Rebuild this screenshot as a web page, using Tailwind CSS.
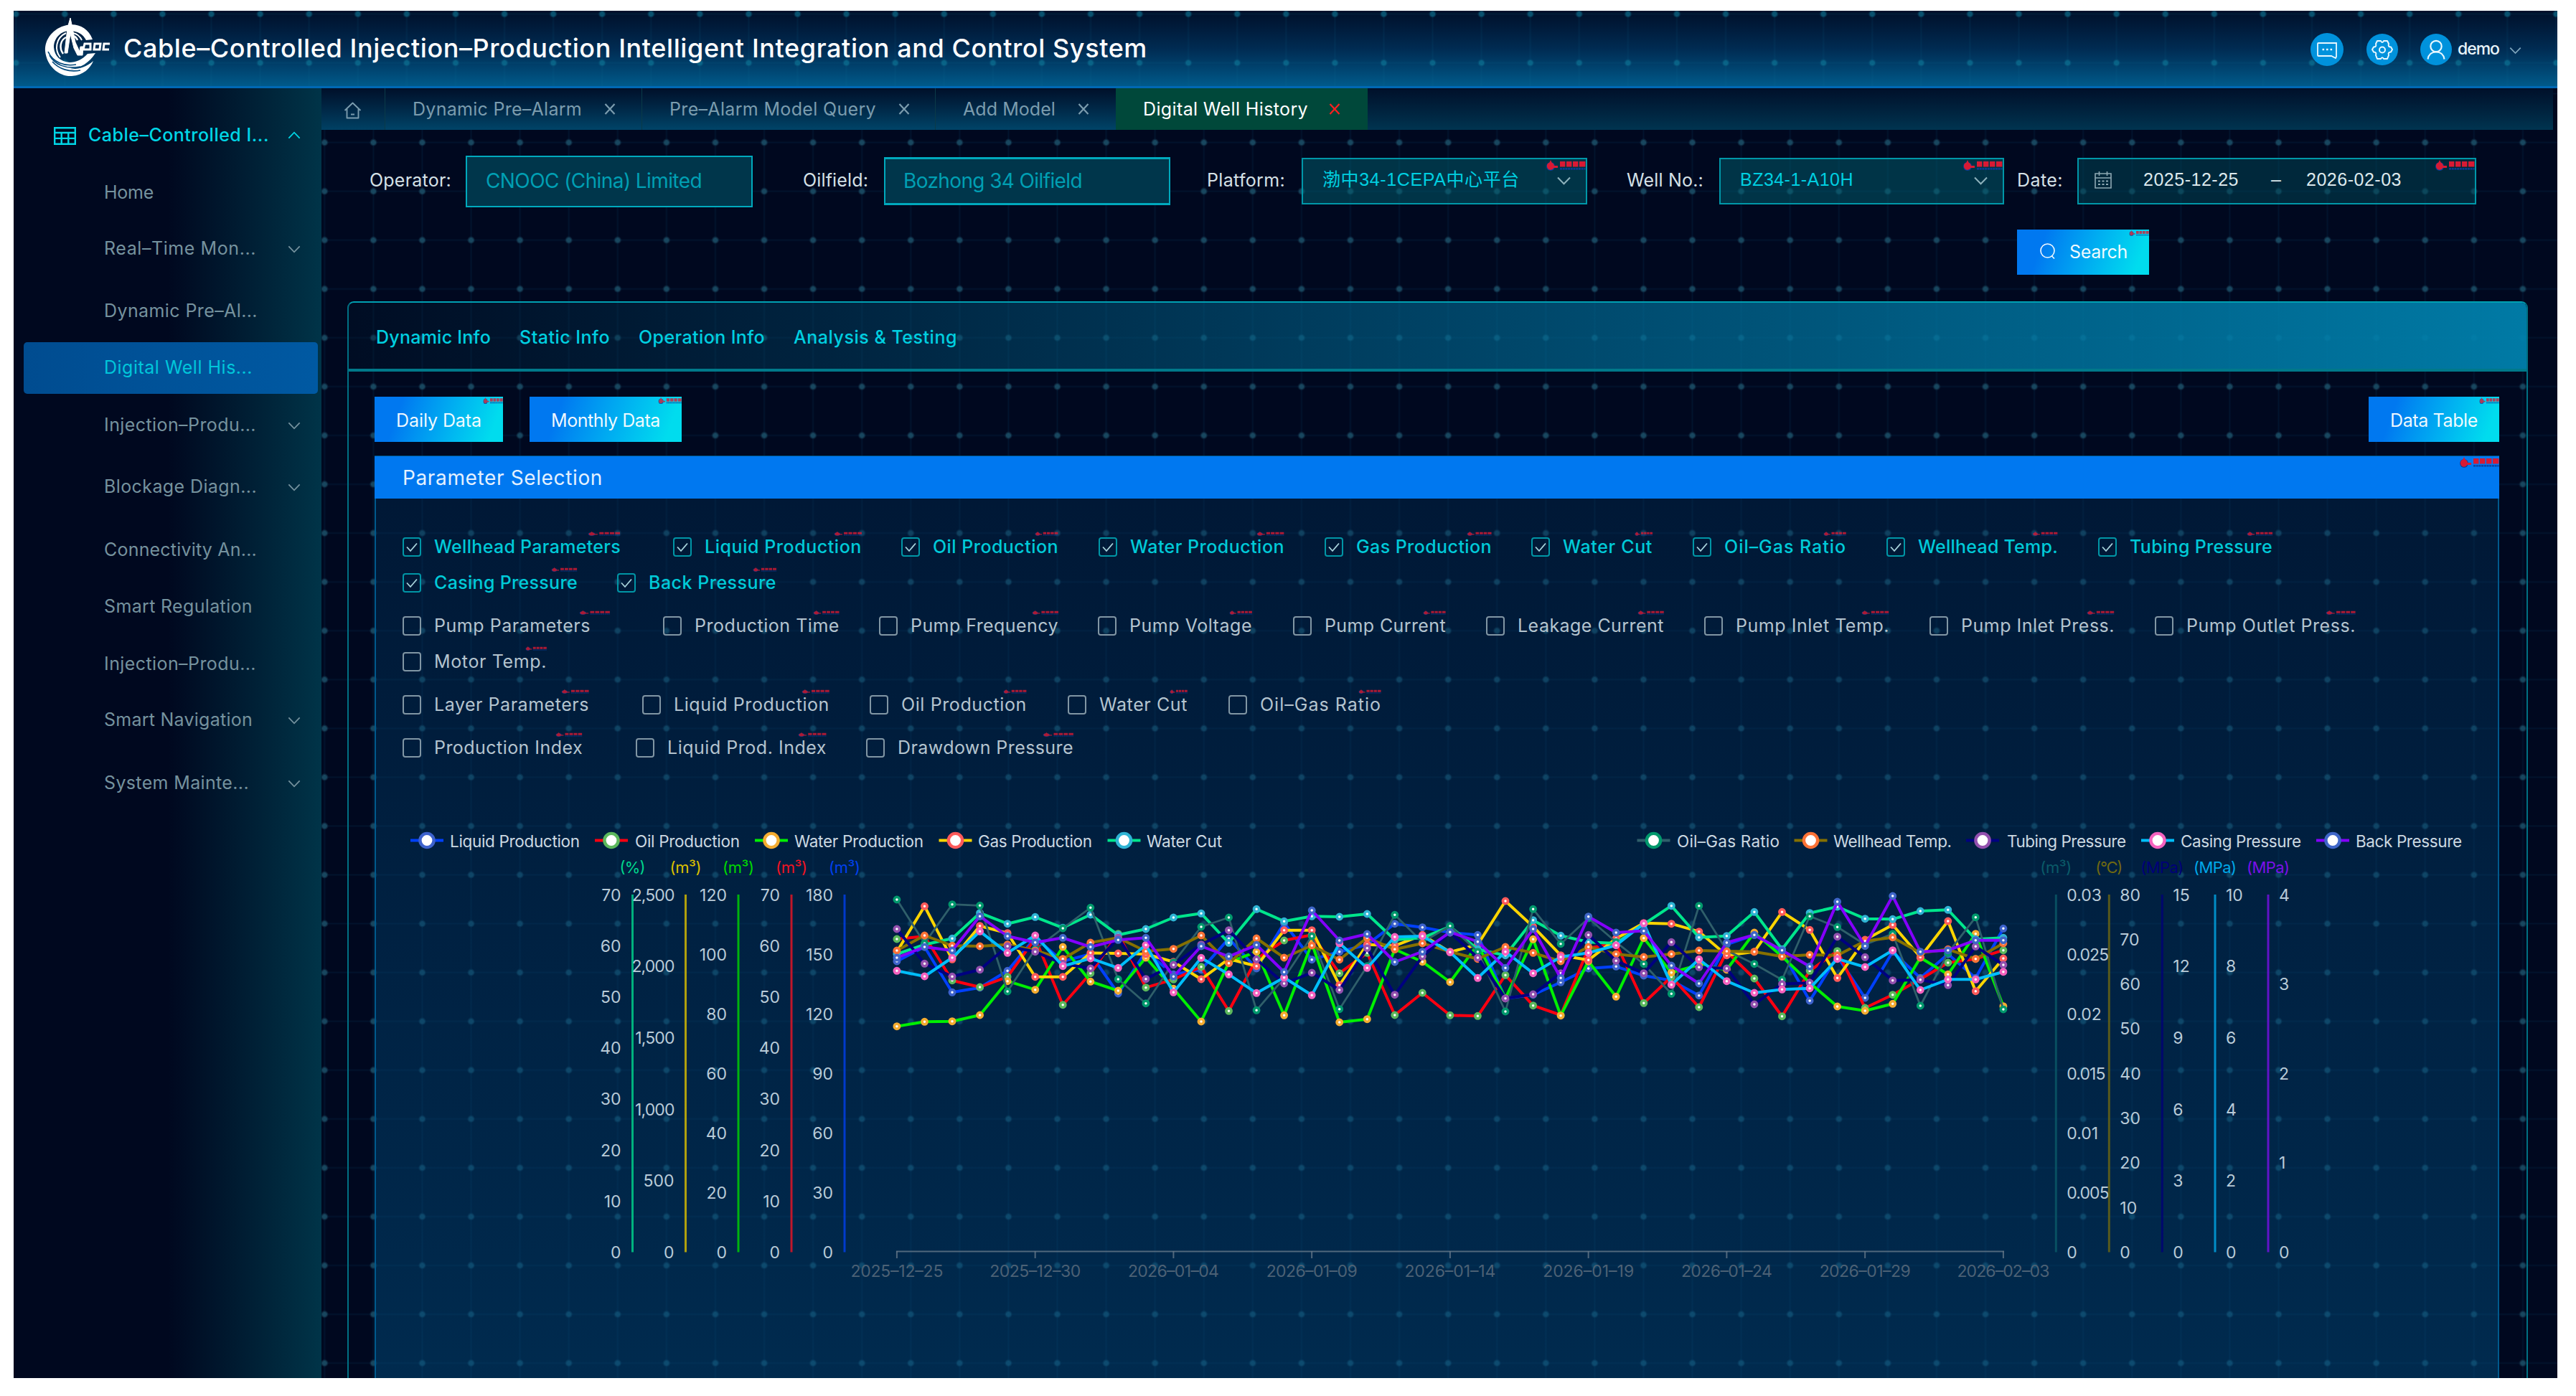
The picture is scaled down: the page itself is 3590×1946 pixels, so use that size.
<!DOCTYPE html>
<html lang="en">
<head>
<meta charset="utf-8">
<title>Cable-Controlled Injection-Production System</title>
<script src="https://cdn.jsdelivr.net/npm/@tailwindcss/browser@4"></script>
</head>
<body class="bg-white w-[3590px] h-[1946px] overflow-hidden font-['Inter','Noto_Sans_CJK_SC',sans-serif] text-[25px] leading-none">
<svg class="hidden">
  <defs>
    <symbol id="wm" viewBox="0 0 56 15" preserveAspectRatio="none">
      <circle cx="7" cy="9" r="6" fill="#0b3f9c"/>
      <path d="M7 0L8.6 3.4A5.6 5.6 0 0 1 12 8H17V11H11.4A5 5 0 0 1 2 9.5 5.6 5.6 0 0 1 5.4 3.4Z" fill="#d81a34"/>
      <path d="M20 2h7.400v7.500H20zM29 2h7.400v7.500H29zM38 2h7.400v7.500H38zM47 2h8.400v7.500H47z" fill="#d81a34"/>
      <path d="M20 12.400H55.500" stroke="#0b3f9c" stroke-width="2.400" stroke-dasharray="3 .7"/>
    </symbol>
    <symbol id="down" viewBox="0 0 20 12"><path d="M1.500 1.500L10 10.200 18.500 1.500" fill="none" stroke="currentColor" stroke-width="2"/></symbol>
    <symbol id="cross" viewBox="0 0 16 16"><path d="M1.500 1L14.500 15M14.500 1L1.500 15" fill="none" stroke="currentColor" stroke-width="2.200"/></symbol>
  </defs>
</svg>
<div class="ml-[19px] mt-[15px] w-[3545px] h-[1906px] overflow-hidden bg-[#00081f] flex flex-col">

  <header class="relative h-[108px] shrink-0 border-b-3 border-[#0068b4] bg-linear-to-b from-[#00102a] via-[#002b52] to-[#005a8a] flex items-center">
    <svg class="absolute inset-0 w-full h-[105px]">
      <defs><pattern id="g1" x="37.300" y="-29.500" width="68.080" height="68.080" patternUnits="userSpaceOnUse"><path d="M34 0V68.100M0 34H68.100" stroke="#0a6a94" stroke-opacity=".1" stroke-width="2"/><circle cx="34" cy="34" r="5" fill="#0a7090" fill-opacity=".28"/><circle cx="34" cy="34" r="3.500" fill="#1287a3" fill-opacity=".38"/></pattern></defs>
      <rect width="3545" height="105" fill="url(#g1)"/>
    </svg>
    <svg class="relative ml-[43px] w-[91px] h-[82px] mt-[-4px] shrink-0" viewBox="0 0 91 82" fill="none" stroke="#fff">
      <path d="M67 30C61 13 45 7 31 10C12 14 0 30 1 46C3 68 21 82 38 81C54 80 64 70 68 60C58 69 46 72 36 71C50 70 62 63 71 49L60 50C53 58 44 62 35 62C22 61 14 53 13 41C13 28 23 18 35 18C46 18 54 23 58 31Z" fill="#fff" stroke="none"/>
      <path d="M7 52C14 65 30 72 50 68M11 61C20 71 34 76 50 73M5 47C12 62 28 68 44 65" stroke="#00477a" stroke-width="1.600"/>
      <path d="M22 55C14 45 15 28 30 21M52 31C49 25 45 22 40 21" stroke-width="2"/>
      <path d="M26 50C20 42 22 31 30 27M46 31C45 28 43 26 40 25" stroke-width="2.500"/>
      <path d="M36 0L32 14 28 49 32 49 36 22 41 42 46 52 53 52 54 40 50 40 49 47 43 34 39 14Z" fill="#fff" stroke="#fff"/>
      <path d="M56 36H64V44H54ZM70 36H78L77 44H69ZM91 36H83L82 44H90" stroke-width="3"/>
    </svg>
    <h1 class="relative ml-[19px] w-[1427px] shrink-0 whitespace-nowrap text-[36px] font-medium text-white mt-[-1px]" data-fit>Cable–Controlled Injection–Production Intelligent Integration and Control System</h1>
    <div class="relative ml-[1621px] mt-[2px] shrink-0 flex items-center">
      <svg class="w-[46px] h-[46px]" viewBox="0 0 46 46" fill="none" stroke="#e8f8ff" stroke-width="1.800"><circle cx="23" cy="23" r="23" fill="#0092dc" stroke="none"/><path d="M11 14H36V33L35 35 29 32H11a1 1 0 0 1-1-1V15a1 1 0 0 1 1-1Z"/><path d="M16.500 23h2.600M22 23h2.600M27.500 23h2.600" stroke-width="2.600"/></svg>
      <svg class="ml-[32px] w-[44px] h-[44px]" viewBox="0 0 44 44" fill="none" stroke="#e8f8ff" stroke-width="2" stroke-linejoin="round"><circle cx="22" cy="22" r="22" fill="#0092dc" stroke="none"/><path d="M15 10L20 10C21 12.500 23 12.500 24 10L29 10 31 14C30 17 31 18.500 34 18.500L36 22 34 25.500C31 25.500 30 27 31 30L29 35 24 35C23 32.500 21 32.500 20 35L15 35 13 30C14 27 13 25.500 10 25.500L8 22 10 18.500C13 18.500 14 17 13 14Z"/><circle cx="22" cy="22.500" r="4"/></svg>
      <svg class="ml-[31px] w-[44px] h-[44px]" viewBox="0 0 44 44" fill="none" stroke="#e8f8ff" stroke-width="2.200"><circle cx="22" cy="22" r="22" fill="#0092dc" stroke="none"/><circle cx="22" cy="17.500" r="7.700"/><path d="M10.500 35.500C11.500 29 16 25.500 22 25.500S32.500 29 33.500 35.500"/></svg>
      <span class="ml-[8px] w-[58px] text-[23px] font-medium text-[#e8f4fa]" data-fit>demo</span>
      <svg class="ml-[14px] mt-[3px] w-[17px] h-[11px] text-[#7fa6bd]"><use href="#down"/></svg>
    </div>
  </header>

  <div class="flex flex-1 min-h-0">
    <aside class="w-[429px] shrink-0 bg-linear-to-r from-[#00081f] from-50% to-[#003448]">
      <div class="mt-[29px] h-[72px] flex items-center text-[#00d6e6]">
        <svg class="ml-[56px] w-[31px] h-[25px] mt-[2px]" viewBox="0 0 31 25" fill="none" stroke="currentColor" stroke-width="2.400"><path d="M1.200 1.200H29.800V23.800H1.200ZM1.200 8H29.800M1.200 15.900H29.800M10.700 8V24M20.300 8V24"/></svg>
        <span class="ml-[17px] w-[252px] whitespace-nowrap font-medium" data-fit>Cable–Controlled I...</span>
        <svg class="ml-[26px] w-[18px] h-[11px] rotate-180"><use href="#down"/></svg>
      </div>
      <nav id="menu" class="text-[#75929e]"></nav>
    </aside>

    <main class="relative flex-1 min-w-0">
      <svg class="absolute inset-0 w-full h-full">
        <defs><pattern id="g2" x="-29.700" y="41.600" width="68.080" height="68.060" patternUnits="userSpaceOnUse"><path d="M34 0V68.100M0 34H68.100" stroke="#0b5f88" stroke-opacity=".13" stroke-width="2"/><circle cx="34" cy="34" r="5" fill="#2a7088" fill-opacity=".26"/><circle cx="34" cy="34" r="3.500" fill="#2f7f95" fill-opacity=".34"/></pattern></defs>
        <rect width="3116" height="1798" fill="url(#g2)"/>
      </svg>
      <div class="relative flex flex-col h-full">
        <div class="h-[58px] w-[3110px] shrink-0 flex bg-linear-to-b from-[#00102a] to-[#003450] text-[#7b9cae]">
          <div class="w-[89px] border-r border-[#0a3a48] bg-linear-to-b from-[#00102a] to-[#004164] flex items-center">
            <svg class="ml-[31px] mt-1 w-[25px] h-[24px]" viewBox="0 0 25 24" fill="none" stroke="currentColor" stroke-width="1.900" stroke-linejoin="round"><path d="M1.500 12L12.500 1.500 23.500 12M4.500 10V22.500H20.500V10M10 17.500H15"/></svg>
          </div>
          <div class="w-[358px] border-r border-[#0a3a48] bg-linear-to-b from-[#00102a] to-[#004468] flex items-center pl-[38px]"><span class="w-[236px] whitespace-nowrap" data-fit>Dynamic Pre–Alarm</span><svg class="ml-[31px] w-[16px] h-[16px]"><use href="#cross"/></svg></div>
          <div class="w-[409px] border-r border-[#0a3a48] bg-linear-to-b from-[#00102a] to-[#004468] flex items-center pl-[38px]"><span class="w-[288px] whitespace-nowrap" data-fit>Pre–Alarm Model Query</span><svg class="ml-[31px] w-[16px] h-[16px]"><use href="#cross"/></svg></div>
          <div class="w-[251px] bg-linear-to-b from-[#00102a] to-[#004468] flex items-center pl-[38px]"><span class="w-[129px] whitespace-nowrap" data-fit>Add Model</span><svg class="ml-[31px] w-[16px] h-[16px]"><use href="#cross"/></svg></div>
          <div class="w-[351px] bg-[#00483a] flex items-center pl-[38px] text-white"><span class="w-[230px] whitespace-nowrap" data-fit>Digital Well History</span><svg class="ml-[29px] w-[16px] h-[16px] text-[#ff2020]"><use href="#cross"/></svg></div>
        </div>

        <div class="mt-[3px] h-[136px] shrink-0 flex items-center text-[#d5e0e6]">
          <span class="ml-[67px] mt-[-2px] w-[114px] whitespace-nowrap" data-fit>Operator:</span>
          <div class="ml-[20px] w-[400px] h-[72px] mt-[2px] border-2 border-[#00a9bd] bg-[#00364b] flex items-center pl-[26px] text-[28px] text-[#009fb3]"><span class="w-[301px] mt-[-2px] whitespace-nowrap" data-fit>CNOOC (China) Limited</span></div>
          <span class="ml-[70px] mt-[-2px] w-[91px] whitespace-nowrap" data-fit>Oilfield:</span>
          <div class="ml-[22px] w-[399px] h-[67px] border-x-2 border-y-3 border-[#00a9bd] bg-[#00364b] flex items-center pl-[25px] text-[28px] text-[#009fb3]"><span class="w-[249px] whitespace-nowrap" data-fit>Bozhong 34 Oilfield</span></div>
          <span class="ml-[51px] mt-[-2px] w-[109px] whitespace-nowrap" data-fit>Platform:</span>
          <div class="relative ml-[23px] w-[398px] h-[65px] border-2 border-[#0097a8] bg-[#00606f]/50 flex items-center pl-[27px] text-[#00cfe0] font-['Liberation_Sans','Noto_Sans_CJK_SC',sans-serif]"><span class="w-[275px] mt-[-3px] whitespace-nowrap" data-fit>渤中34-1CEPA中心平台</span><svg class="ml-[51px] w-[21px] h-[12px] text-[#8fb3bd]"><use href="#down"/></svg><svg class="absolute right-0 top-px w-[56px] h-[15px]"><use href="#wm"/></svg></div>
          <span class="ml-[55px] mt-[-2px] w-[107px] whitespace-nowrap" data-fit>Well No.:</span>
          <div class="relative ml-[22px] w-[397px] h-[65px] border-2 border-[#0097a8] bg-[#00606f]/50 flex items-center pl-[27px] text-[#00cfe0] font-['Liberation_Sans',sans-serif]"><span class="w-[158px] mt-[-3px] whitespace-nowrap" data-fit>BZ34-1-A10H</span><svg class="ml-[167px] w-[21px] h-[12px] text-[#8fb3bd]"><use href="#down"/></svg><svg class="absolute right-0 top-px w-[56px] h-[15px]"><use href="#wm"/></svg></div>
          <span class="ml-[18px] mt-[-2px] w-[64px] whitespace-nowrap" data-fit>Date:</span>
          <div class="relative ml-[20px] w-[556px] h-[65px] border-2 border-[#0097a8] bg-[#004858]/50 flex items-center text-[#dce8ec] font-['Liberation_Sans',sans-serif]">
            <svg class="ml-[22px] mt-[-3px] w-[24px] h-[24px]" viewBox="0 0 24 24" fill="none" stroke="#8fa9b4" stroke-width="1.600"><path d="M1 3H23V23H1ZM1 9H23M6.500 0V6M17.500 0V6"/><path d="M5 13.500H19M5 18H19" stroke-width="2.200" stroke-dasharray="3 2.500"/></svg>
            <span class="ml-[44px] mt-[-3px] w-[133px] whitespace-nowrap" data-fit>2025-12-25</span>
            <span class="ml-[45px] mt-[-3px] w-[13px]">–</span>
            <span class="ml-[36px] mt-[-3px] w-[133px] whitespace-nowrap" data-fit>2026-02-03</span>
            <svg class="absolute right-0 top-px w-[56px] h-[15px]"><use href="#wm"/></svg>
          </div>
        </div>

        <div class="relative ml-[2363px] w-[184px] h-[63px] shrink-0 bg-linear-110 from-[#0078f0] from-20% to-[#00dcee] to-90% flex items-center text-white/95">
          <svg class="ml-[32px] mt-[-3px] w-[22px] h-[22px]" viewBox="0 0 22 22" fill="none" stroke="currentColor" stroke-width="1.600"><circle cx="10.500" cy="10.500" r="9.500"/><path d="M16 17.500L20 21.500"/></svg>
          <span class="ml-[19px] w-[81px] whitespace-nowrap" data-fit>Search</span>
          <svg class="absolute right-0 top-px w-[28px] h-[8px] opacity-80"><use href="#wm"/></svg>
        </div>

        <section class="mt-[37px] ml-[36px] w-[3039px] h-[1520px] shrink-0 border-2 border-[#007083] border-t-[#00a0b2] rounded-t-[9px] overflow-hidden">
          <div class="h-[96px] border-b-4 border-[#00798a] bg-linear-to-r from-[#00182e]/30 via-[#006a94]/60 to-[#0080ac]/95 flex items-center pt-[5px] pl-[38px] font-medium text-[#00cfe0]">
            <span class="w-[160px] whitespace-nowrap" data-fit>Dynamic Info</span>
            <span class="ml-[40px] w-[126px] whitespace-nowrap" data-fit>Static Info</span>
            <span class="ml-[40px] w-[176px] whitespace-nowrap" data-fit>Operation Info</span>
            <span class="ml-[40px] w-[228px] whitespace-nowrap" data-fit>Analysis &amp; Testing</span>
          </div>
          <div class="mt-[35px] ml-[36px] w-[2961px] flex text-white/95">
            <div class="relative w-[179px] h-[63px] pt-[3px] bg-linear-110 from-[#0078f0] from-20% to-[#00dcee] to-90% flex items-center pl-[30px]"><span class="w-[119px] whitespace-nowrap" data-fit>Daily Data</span><svg class="absolute right-0 top-px w-[28px] h-[9px] opacity-80"><use href="#wm"/></svg></div>
            <div class="relative ml-[37px] w-[212px] h-[63px] pt-[3px] bg-linear-110 from-[#0078f0] from-20% to-[#00dcee] to-90% flex items-center pl-[30px]"><span class="w-[152px] whitespace-nowrap" data-fit>Monthly Data</span><svg class="absolute right-0 top-px w-[33px] h-[9px] opacity-80"><use href="#wm"/></svg></div>
            <div class="relative ml-auto w-[182px] h-[63px] pt-[3px] bg-linear-110 from-[#0078f0] from-20% to-[#00dcee] to-90% flex items-center pl-[30px]"><span class="w-[122px] whitespace-nowrap" data-fit>Data Table</span><svg class="absolute right-0 top-px w-[28px] h-[9px] opacity-80"><use href="#wm"/></svg></div>
          </div>
          <div class="mt-[19px] ml-[36px] w-[2961px]">
            <div class="relative h-[60px] border-t border-[#00507a] bg-[#0078f0] flex items-center pl-[39px] text-[28px] text-[#e4f1ff]"><span class="w-[279px] whitespace-nowrap" data-fit>Parameter Selection</span><svg class="absolute right-0 top-px w-[56px] h-[15px]"><use href="#wm"/></svg></div>
            <div class="h-[1226px] border-x-2 border-[#00598c] bg-linear-to-b from-[#003660]/35 to-[#005082]/48 flex flex-col">
              <div id="params" class="mt-[42px] flex flex-col"></div>
              <svg id="chart" class="mt-[73px] w-[2957px] h-[779px]" viewBox="524 1140 2957 779"></svg>
            </div>
          </div>
        </section>
      </div>
    </main>
  </div>
</div>

<script>
// Sidebar entries: label, text width, gap above, expandable, active
const menu = [
  ['Home', 69, 9], ['Real–Time Mon...', 212, 6, 1], ['Dynamic Pre–Al...', 214, 15], ['Digital Well His...', 207, 7, 0, 1],
  ['Injection–Produ...', 212, 8, 1], ['Blockage Diagn...', 213, 14, 1], ['Connectivity An...', 213, 16], ['Smart Regulation', 207, 7],
  ['Injection–Produ...', 212, 8], ['Smart Navigation', 207, 6, 1], ['System Mainte...', 202, 16, 1]
];
document.getElementById('menu').innerHTML = menu.map(([t, w, gap, sub, on]) =>
  `<div class="ml-[14px] w-[410px] h-[72px] rounded-[5px] flex items-center ${on ? 'bg-linear-to-r from-[#004c90] to-[#0059a2] text-[#00c6da]' : ''}" style="margin-top:${gap}px"><span class="ml-[112px] mt-[-1px] whitespace-nowrap" style="width:${w}px" data-fit>${t}</span>${sub ? `<svg class="w-[18px] h-[11px]" style="margin-left:${256 - w}px"><use href="#down"/></svg>` : ''}</div>`).join('');

// Parameter rows: label, box x, text end, optional item end
const rows = [
  { on: 1, gap: 0, items: [['Wellhead Parameters', 561, 865], ['Liquid Production', 938, 1201], ['Oil Production', 1256, 1475], ['Water Production', 1531, 1790], ['Gas Production', 1846, 2079], ['Water Cut', 2134, 2303], ['Oil–Gas Ratio', 2359, 2573], ['Wellhead Temp.', 2629, 2868], ['Tubing Pressure', 2924, 3167]] },
  { on: 1, gap: 0, items: [['Casing Pressure', 561, 805], ['Back Pressure', 860, 1082]] },
  { gap: 10, items: [['Pump Parameters', 561, 823, 850], ['Production Time', 924, 1170], ['Pump Frequency', 1225, 1475], ['Pump Voltage', 1530, 1745], ['Pump Current', 1802, 2015], ['Leakage Current', 2071, 2319], ['Pump Inlet Temp.', 2375, 2633], ['Pump Inlet Press.', 2689, 2947], ['Pump Outlet Press.', 3003, 3283]] },
  { gap: 0, items: [['Motor Temp.', 561, 762]] },
  { gap: 10, items: [['Layer Parameters', 561, 821], ['Liquid Production', 895, 1156], ['Oil Production', 1212, 1431], ['Water Cut', 1488, 1655], ['Oil–Gas Ratio', 1712, 1925]] },
  { gap: 10, items: [['Production Index', 561, 812], ['Liquid Prod. Index', 886, 1152], ['Drawdown Pressure', 1207, 1496]] }
];
document.getElementById('params').innerHTML = rows.map(r => {
  let pos = 524;
  return `<div class="flex items-center h-[50px]" style="margin-top:${r.gap}px">` + r.items.map(([t, x, e, ie]) => {
    const end = ie || e, ml = x - pos; pos = end;
    return `<div class="relative h-[50px] flex items-center ${r.on ? 'font-medium text-[#00cad8]' : 'text-[#b4c4cf]'}" style="margin-left:${ml}px;width:${end - x}px">
      <svg class="w-[26px] h-[27px] shrink-0" viewBox="0 0 26 27" fill="none"><rect x="1" y="1" width="24" height="25" rx="3" stroke="${r.on ? '#0096a6' : '#8196a4'}" stroke-width="2"/>${r.on ? '<path d="M6 13.500L11 19 20 8.500" stroke="#a8d4dc" stroke-width="1.800"/>' : ''}</svg>
      <span class="ml-[18px] shrink-0 whitespace-nowrap" style="width:${e - x - 44}px" data-fit>${t}</span>
      <svg class="absolute right-0 top-[4px] h-[6px] opacity-80" style="width:${(end - x) * .15}px"><use href="#wm"/></svg></div>`;
  }).join('') + '</div>';
}).join('');

// Chart
const T = (x, y, t, w, fill, anchor = 'start', size = 23, extra = '') => `<text x="${x}" y="${y}" text-anchor="${anchor}" font-size="${size}" fill="${fill}" ${w ? `textLength="${w}"` : ''} ${extra}>${t}</text>`;
let s = '';
const legend = [
  ['Liquid Production', 595, 627, 808, '#0040ff', '#3d62cc'], ['Oil Production', 852, 885, 1031, '#ff0010', '#5cb85c'],
  ['Water Production', 1075, 1107, 1287, '#00f000', '#f5ac30'], ['Gas Production', 1331.5, 1363, 1522, '#ffd500', '#ff5a5a'],
  ['Water Cut', 1566.5, 1598, 1703, '#00e68c', '#2fb4d4'], ['Oil–Gas Ratio', 2304.5, 2337, 2480, '#2f5f6a', '#00986c'],
  ['Wellhead Temp.', 2523.5, 2555, 2720, '#857000', '#fc7236'], ['Tubing Pressure', 2763, 2797, 2963, '#000080', '#9350ae'],
  ['Casing Pressure', 3007, 3039, 3207, '#00bfff', '#f562bf'], ['Back Pressure', 3251, 3283, 3431, '#8400ff', '#3f66c8']
];
for (const [t, c, x, e, line, ring] of legend)
  s += `<path d="M${c - 23} 1171.500H${c + 23}" stroke="${line}" stroke-width="4"/><circle cx="${c}" cy="1171.500" r="9.600" fill="#fff" stroke="${ring}" stroke-width="4.400"/>` + T(x, 1180.5, t, e - x, '#ccd9e2', 'start', 22.5);

const y0 = 1745.5, y1 = 1247;
const axis = (x, color, unit, uw, labels, right) => {
  s += `<path d="M${x} ${y1}V${y0}" stroke="${color}" stroke-width="3" opacity=".8"/>` + T(x, 1217, unit, uw, color, 'middle', 22);
  labels.forEach((l, i) => { s += T(right ? x + 15 : x - 16, y0 + 8.5 - (y0 - y1) * i / (labels.length - 1), l, 0, '#b9cbd8', right ? 'start' : 'end', 23, l.length > 4 ? 'letter-spacing="-.9"' : ''); });
};
const seq = (n, st) => Array.from({ length: n }, (_, i) => (i * st).toLocaleString('en-US'));
axis(881.5, '#00d68c', '(%)', 36, seq(8, 10));
axis(955.5, '#dcc000', '(m³)', 44, seq(6, 500));
axis(1029, '#00d800', '(m³)', 44, seq(7, 20));
axis(1103, '#f01424', '(m³)', 44, seq(8, 10));
axis(1177, '#0040ee', '(m³)', 44, seq(7, 30));
axis(2865.3, '#0a5a68', '(m³)', 44, ['0', '0.005', '0.01', '0.015', '0.02', '0.025', '0.03'], 1);
axis(2939.3, '#6e6812', '(°C)', 38, seq(9, 10), 1);
axis(3013.3, '#000078', '(MPa)', 60, seq(6, 3), 1);
axis(3087, '#00a8e8', '(MPa)', 60, seq(6, 2), 1);
axis(3161, '#7a10e8', '(MPa)', 60, seq(5, 1), 1);

const X = i => 1249.9 + i * 38.55;
s += `<path d="M1249 1744.500H2793" stroke="#66788a" stroke-width="2" opacity=".8"/>`;
['2025–12–25', '2025–12–30', '2026–01–04', '2026–01–09', '2026–01–14', '2026–01–19', '2026–01–24', '2026–01–29', '2026–02–03'].forEach((d, i) => {
  s += `<path d="M${X(i * 5)} 1744V1754" stroke="#66788a" stroke-width="2" opacity=".8"/>` + T(X(i * 5), 1780, d, i % 8 ? 127 : 129, '#4c6175', 'middle', 23);
});

// Daily samples, vertical offsets in thirds of a pixel below y = 1220
const data = [
  [360,300,490,470,400,262,360,330,495,320,415,395,265,390,200,353,320,290,203,218,240,250,515,500,448,390,382,420,440,503,290,250,320,525,340,513,320,430,330,430,223],
  [267,255,440,468,425,265,542,410,245,470,436,383,568,350,273,250,410,325,585,492,586,589,418,545,585,305,285,535,425,552,320,432,590,400,317,555,500,435,366,350,314],
  [632,613,611,585,443,479,300,445,483,345,475,612,365,320,586,285,615,602,310,362,447,290,515,268,587,360,508,263,407,375,395,240,340,450,549,567,538,345,415,245,548],
  [320,130,352,212,242,425,425,325,327,330,362,435,350,380,230,230,460,290,295,250,322,290,108,215,335,355,265,200,203,236,335,320,154,229,430,270,208,343,192,485,348],
  [330,290,265,158,203,175,220,165,250,225,177,160,283,142,193,172,174,162,270,262,215,310,335,188,253,280,285,205,128,260,254,154,310,158,132,182,184,150,145,268,262],
  [102,285,122,127,486,310,222,136,435,536,365,216,177,565,430,255,560,380,166,280,212,320,570,142,287,180,280,371,496,128,315,371,437,172,217,290,245,546,325,176,561],
  [315,252,295,297,290,315,350,282,262,318,308,252,368,264,345,294,353,262,310,285,320,350,300,325,360,300,330,342,330,315,318,320,340,333,335,275,260,325,310,350,285],
  [225,370,424,395,297,320,370,390,262,434,375,290,230,352,453,408,480,305,500,340,240,345,515,498,410,250,358,410,280,385,390,540,455,450,257,343,440,437,460,298,375],
  [400,423,345,235,325,252,380,348,388,292,490,346,415,493,428,502,285,388,258,255,322,430,320,410,342,325,293,202,458,352,443,492,478,473,350,384,314,480,436,436,404],
  [345,300,315,172,255,281,262,300,271,262,424,297,340,292,405,147,273,246,363,320,238,278,388,225,430,173,240,233,378,453,282,250,314,382,111,296,87,320,314,272,272]
];
data.forEach((d, k) => {
  const thin = k === 5;
  s += `<polyline points="${d.map((v, i) => X(i).toFixed(1) + ',' + (1220 + v / 3).toFixed(1)).join(' ')}" fill="none" stroke="${legend[k][4]}" stroke-width="${thin ? 2.8 : 4}" stroke-linejoin="round"/>`;
  s += d.map((v, i) => `<circle cx="${X(i).toFixed(1)}" cy="${(1220 + v / 3).toFixed(1)}" r="3.600" fill="#fff" stroke="${legend[k][5]}" stroke-width="3.700"/>`).join('');
});
document.getElementById('chart').innerHTML = s;

// Track each label so that it fills its own box, once the stylesheet is in force
function fit() {
  if (getComputedStyle(document.body).fontSize !== '25px') return;
  document.querySelectorAll('[data-fit]').forEach(el => {
    el.style.letterSpacing = '0.001px';
    const r = document.createRange(); r.selectNodeContents(el);
    const n = [...el.textContent].length;
    const gap = (el.offsetWidth - r.getBoundingClientRect().width) / n;
    el.style.letterSpacing = Math.max(-1.5, Math.min(1.5, gap)).toFixed(3) + 'px';
  });
}
fit();
addEventListener('load', () => { fit(); requestAnimationFrame(fit); });
document.fonts.ready.then(fit);
</script>
</body>
</html>
